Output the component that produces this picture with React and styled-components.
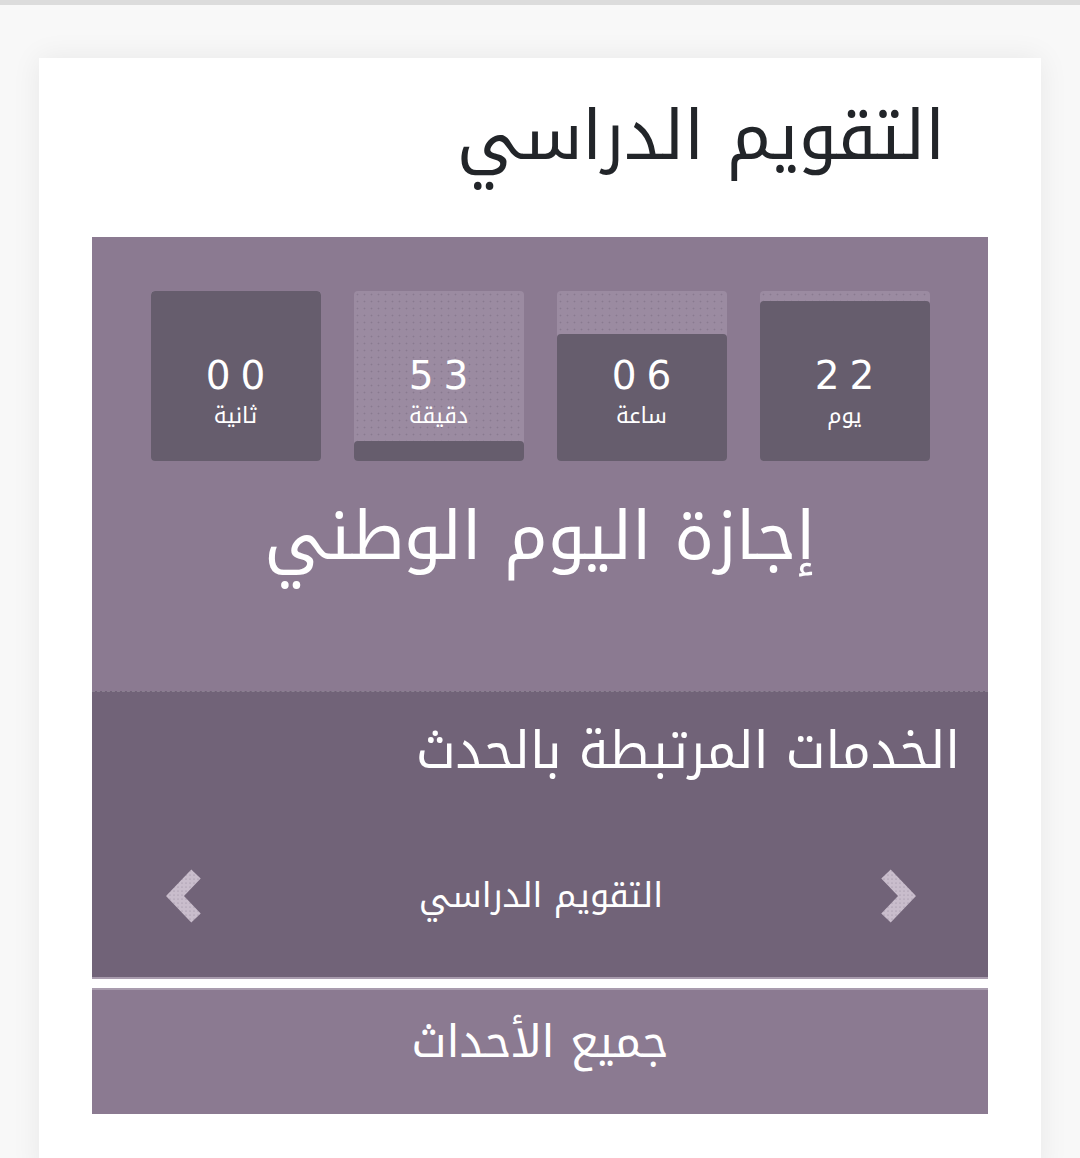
import styled, { createGlobalStyle } from "styled-components";

const GlobalStyle = createGlobalStyle`
  body {
    margin: 0;
    background: #f8f8f8;
    font-family: "Noto Kufi Arabic", "Noto Sans Arabic", "DejaVu Sans", sans-serif;
  }
`;

const TopBar = styled.div`
  height: 5px;
  background: #dcdcdc;
`;

const Page = styled.div`
  padding: 53px 39px 0;
  direction: rtl;
`;

const Card = styled.div`
  background: #ffffff;
  padding: 0 53px 60px;
  box-shadow: 0 0 28px rgba(0, 0, 0, 0.07);
`;

const Title = styled.h1`
  margin: 0;
  height: 179px;
  box-sizing: border-box;
  padding: 38px 43px 0 0;
  font-size: 68px;
  font-weight: 400;
  color: #222529;
  line-height: 1.2;
`;

const EventPanel = styled.section`
  background: #8b7a91;
`;

const Countdown = styled.div`
  display: flex;
  justify-content: center;
  gap: 33px;
  padding-top: 54px;
`;

const TimeBox = styled.div`
  position: relative;
  width: 170px;
  height: 170px;
  border-radius: 4px;
  overflow: hidden;
  background-color: #9b8ba1;
  background-image: radial-gradient(rgba(95, 82, 103, 0.3) 0.8px, transparent 1.1px);
  background-size: 7px 7px;
`;

const Fill = styled.div`
  position: absolute;
  left: 0;
  right: 0;
  bottom: 0;
  background: #665d6d;
  border-radius: 4px 4px 0 0;
`;

const TimeText = styled.div`
  position: relative;
  display: flex;
  flex-direction: column;
  align-items: center;
  padding-top: 65px;
  color: #ffffff;
`;

const Digits = styled.span`
  font-family: "DejaVu Sans", sans-serif;
  font-size: 39px;
  line-height: 1;
  letter-spacing: 10px;
  margin-right: -10px;
  direction: ltr;
`;

const Unit = styled.span`
  font-size: 22px;
  line-height: 1;
  margin-top: 10px;
`;

const EventName = styled.h2`
  margin: 0;
  height: 230px;
  box-sizing: border-box;
  padding-top: 32px;
  text-align: center;
  font-size: 67px;
  font-weight: 400;
  color: #ffffff;
  line-height: 1.3;
`;

const Services = styled.section`
  background: #716378;
  border-top: 1px dashed rgba(255, 255, 255, 0.18);
  border-bottom: 2px solid #a99cae;
  height: 288px;
  box-sizing: border-box;
  padding: 26px 28px 0;
`;

const ServicesTitle = styled.h3`
  margin: 0;
  font-size: 51px;
  font-weight: 400;
  color: #ffffff;
  line-height: 1.3;
`;

const Carousel = styled.div`
  display: flex;
  align-items: center;
  justify-content: space-between;
  padding: 84px 42px 0 44px;
`;

const ArrowButton = styled.button`
  background: none;
  border: 0;
  padding: 0;
  width: 40px;
  height: 56px;
  cursor: pointer;
  display: flex;
  align-items: center;
  justify-content: center;
`;

const ServiceName = styled.span`
  font-size: 34px;
  color: #ffffff;
  line-height: 1.3;
`;

const AllEvents = styled.a`
  display: flex;
  align-items: center;
  justify-content: center;
  margin-top: 9px;
  height: 126px;
  padding-bottom: 20px;
  background: #8b7a91;
  border-top: 2px solid #a99cae;
  box-sizing: border-box;
  font-size: 45px;
  color: #ffffff;
  text-decoration: none;
  cursor: pointer;
`;

function Chevron({ dir }) {
  const pts = dir === "left" ? "32,5 11,27 32,49" : "8,5 29,27 8,49";
  return (
    <svg width="40" height="56" viewBox="0 0 40 54">
      <defs>
        <pattern id={`dots-${dir}`} width="4" height="4" patternUnits="userSpaceOnUse">
          <rect width="4" height="4" fill="#c9bdcc" />
          <circle cx="2" cy="2" r="0.55" fill="#938499" />
        </pattern>
      </defs>
      <polyline
        points={pts}
        fill="none"
        stroke={`url(#dots-${dir})`}
        strokeWidth="13"
        strokeLinejoin="miter"
        strokeLinecap="butt"
      />
    </svg>
  );
}

const units = [
  { value: "22", label: "يوم", fill: 94 },
  { value: "06", label: "ساعة", fill: 75 },
  { value: "53", label: "دقيقة", fill: 12 },
  { value: "00", label: "ثانية", fill: 100 },
];

export default function App() {
  return (
    <>
      <GlobalStyle />
      <TopBar />
      <Page>
        <Card>
          <Title>التقويم الدراسي</Title>
          <EventPanel>
            <Countdown>
              {units.map((u) => (
                <TimeBox key={u.label}>
                  <Fill style={{ height: `${u.fill}%` }} />
                  <TimeText>
                    <Digits>{u.value}</Digits>
                    <Unit>{u.label}</Unit>
                  </TimeText>
                </TimeBox>
              ))}
            </Countdown>
            <EventName>إجازة اليوم الوطني</EventName>
          </EventPanel>
          <Services>
            <ServicesTitle>الخدمات المرتبطة بالحدث</ServicesTitle>
            <Carousel>
              <ArrowButton aria-label="السابق">
                <Chevron dir="right" />
              </ArrowButton>
              <ServiceName>التقويم الدراسي</ServiceName>
              <ArrowButton aria-label="التالي">
                <Chevron dir="left" />
              </ArrowButton>
            </Carousel>
          </Services>
          <AllEvents>جميع الأحداث</AllEvents>
        </Card>
      </Page>
    </>
  );
}
